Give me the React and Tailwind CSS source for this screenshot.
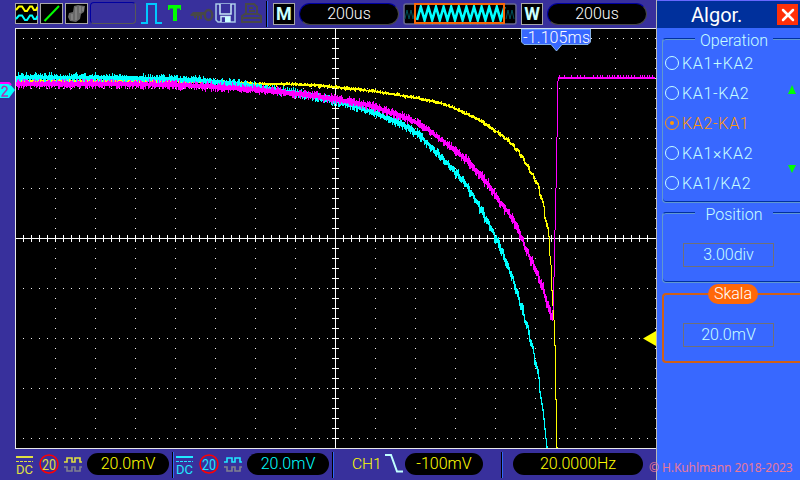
import { X } from 'lucide-react'

// [x, y] anchors of each trace, in screen pixels
const CH1 = [
  [16, 81], [150, 81], [220, 82], [260, 84], [300, 84.5], [335, 87], [375, 91.5], [410, 97], [440, 103], [460, 111],
  [475, 118], [495, 131], [507, 140], [519, 153], [528, 168], [538, 187], [544, 212], [548, 238],
  [551, 265], [552, 290], [554, 320], [555, 345], [556, 400], [557, 448],
]
const CH2 = [
  [16, 77.5], [90, 77.5], [150, 78.5], [200, 80.5], [235, 84], [270, 89], [300, 94], [335, 101], [350, 105],
  [375, 113], [400, 124], [417, 134], [433, 150], [450, 167], [467, 187], [483, 215], [490, 228],
  [500, 249], [510, 273], [520, 305], [528, 332], [536, 368], [543, 410], [547, 448],
]
const MATH = [
  [16, 84], [100, 84], [150, 84.5], [200, 86], [235, 88], [270, 91], [300, 94], [333, 99], [367, 105], [383, 110],
  [400, 116], [417, 123], [433, 134], [450, 147], [467, 161], [483, 179], [498, 200], [510, 216],
  [520, 236], [527, 253], [537, 275], [547, 303], [552, 318],
]
const MATH_EDGE = 'M552.5 320V310M553.5 310V277M554.5 277V230M555.5 230V188M556.5 188V137M557.5 137V81M558.5 81V77'

function yAt(points, x) {
  for (let i = 1; i < points.length; i++) {
    const [x0, y0] = points[i - 1]
    const [x1, y1] = points[i]
    if (x <= x1) return y0 + ((y1 - y0) * (x - x0)) / (x1 - x0)
  }
  return points[points.length - 1][1]
}

// one vertical min/max bar per pixel column, like the scope does it
// the samples come in 5px blocks, so the steep part looks like a staircase
function trace(points, half, noise, seed) {
  let s = seed
  const rnd = () => {
    s = (s * 16807) % 2147483647
    return s / 2147483647
  }
  const end = points[points.length - 1][0]
  const lastBlock = Math.floor(end / 5) * 5 - 5
  const stair = x => {
    if (x >= lastBlock) return yAt(points, x)
    const block = Math.floor(x / 5) * 5
    const t = (x - block) / 5
    return yAt(points, block + 5 * (t < 0.7 ? t * 0.45 : 0.315 + (t - 0.7) * 2.283))
  }
  let d = ''
  for (let x = 16; x <= end; x++) {
    const a = stair(x)
    const b = stair(x + 1)
    const thin = Math.abs(b - a) > 5 ? 0.3 : 1
    const top = Math.round(Math.min(a, b) - thin * (half + rnd() ** 2 * noise))
    const bottom = Math.round(Math.max(a, b) + thin * (half + rnd() ** 2 * noise))
    d += `M${x + 0.5} ${top}V${Math.min(bottom, 448)}`
  }
  return d
}

function flatTop() {
  let d = 'M559 78H655'
  const bumps = [559, 564, 571, 577, 580, 584, 593, 597, 600, 602, 607, 609, 612, 614, 617, 618, 620, 623, 626, 628, 631, 634, 640, 642, 644, 647, 649, 652]
  bumps.forEach(x => { d += `M${x + 0.5} 75V77` })
  return d
}

function grid() {
  let d = ''
  for (let y = 38; y < 448; y += 50) {
    for (let x = 23; x < 655; x += 8) d += `M${x} ${y + 0.5}h1`
  }
  for (let x = 55; x <= 655; x += 40) {
    for (let y = 38; y < 448; y += 10) d += `M${x} ${y + 0.5}h1`
  }
  return d
}

function axes() {
  let d = 'M16 238.5H656M335.5 29V448'
  for (let x = 23; x < 655; x += 8) d += `M${x + 0.5} 235v7`
  for (let y = 38; y < 448; y += 10) d += `M332 ${y + 0.5}h7`
  return d
}

function zigzag(x0, x1, step, lo, hi) {
  let d = `M${x0} ${lo}`
  let up = true
  for (let x = x0 + step; x <= x1; x += step) {
    d += `L${x} ${up ? hi : lo}`
    up = !up
  }
  return d
}

function Pill({ className, children }) {
  return (
    <div className={`flex shrink-0 items-center justify-center rounded-full bg-black text-[16px] leading-none font-light ${className}`}>
      {children}
    </div>
  )
}

function Divider({ className }) {
  return <div className={`h-[26px] w-[2px] shrink-0 border-l border-black bg-[#3068f8] ${className}`} />
}

function Letter({ children, className }) {
  return (
    <div className={`flex h-[22px] w-[22px] shrink-0 items-center justify-center border border-[#a8a8a8] bg-black text-[18px] leading-none font-bold text-[#c8ffff] ${className}`}>
      {children}
    </div>
  )
}

function TopBar() {
  return (
    <div className="flex h-[28px] items-start bg-[#38309c] pt-[3px] pl-[15px]">
      {/* Iconos de menú */}
      <svg className="h-[21px] w-[23px] shrink-0" viewBox="0 0 23 21">
        <rect x=".5" y=".5" width="22" height="20" fill="#000" stroke="#a8a8a8" />
        <path d="M1 7L4 3.500L7 3.500L10 8L12 8L15 3.500H17L19 7H21L22.500 4" fill="none" stroke="#ff0" strokeWidth="2" />
        <path d="M1 16L4 12.500L7 12.500L10 17L12 17L15 12.500H17L19 16H21L22.500 13" fill="none" stroke="#0ff" strokeWidth="2" />
      </svg>
      <svg className="ml-[2px] h-[21px] w-[23px] shrink-0" viewBox="0 0 23 21">
        <rect x=".5" y=".5" width="22" height="20" fill="#000" stroke="#a8a8a8" />
        <path d="M4.500 18L19 3" stroke="#0f0" strokeWidth="2" />
      </svg>
      <svg className="ml-[2px] h-[21px] w-[23px] shrink-0" viewBox="0 0 23 21">
        <rect x=".5" y=".5" width="22" height="20" fill="#000" stroke="#a8a8a8" />
        <path d="M9 3L13 2L20 3L19 9L16 11L15 16L11 19L5 18L3 14L4 10L8 9Z" fill="#686868" />
        <path d="M11 4V17M15 3V10M7 11V17M18 4V8" stroke="#888" strokeWidth="1.500" />
      </svg>
      <div className="-mt-px ml-[2px] h-[22px] w-[46px] shrink-0 rounded-[4px] border border-t-[#0000a0] border-r-[#585858] border-b-[#585858] border-l-[#0000a0]" />
      <svg className="ml-[5px] h-[21px] w-[22px] shrink-0" viewBox="0 0 22 21">
        <path d="M0 20H6V1H15V20H21" fill="none" stroke="#00c8ff" strokeWidth="2" />
      </svg>
      <svg className="ml-[5px] h-[21px] w-[14px] shrink-0" viewBox="0 0 14 21">
        <path d="M0 2H13V7H12V5.500H9V18H5V5.500H1.500V7H0Z" fill="#0f0" />
      </svg>
      <svg className="ml-[8px] h-[21px] w-[24px] shrink-0" viewBox="0 0 24 21">
        <path d="M0 12L3 9H14V12H12V16H10V13H9V17H7V13H6V15H4V13H1Z" fill="#484848" />
        <ellipse cx="18.500" cy="12" rx="3.700" ry="5" fill="none" stroke="#484848" strokeWidth="2.500" />
      </svg>
      <svg className="ml-[1px] h-[21px] w-[21px] shrink-0" viewBox="0 0 21 21">
        <path d="M1 1H20V19H3L1 17Z" fill="#38309c" stroke="#a8c8e8" strokeWidth="1.500" />
        <path d="M5 1V11H16V1M6 19V13.500H15V19" fill="#38309c" stroke="#c8e8f8" strokeWidth="1.500" />
        <path d="M10 14H15V19H10Z" fill="#c8ffff" />
      </svg>
      <svg className="ml-[5px] h-[21px] w-[21px] shrink-0" viewBox="0 0 21 21" fill="none" stroke="#484848" strokeWidth="2">
        <path d="M5 10V1H13L16 4V10M8 5H12M8 8H14M1 19V13L4 11H17L20 13V19ZM1 15H20" />
      </svg>
      <Divider className="-mt-[2px] ml-[4px]" />

      {/* Base de tiempo */}
      <Letter className="ml-[5px]">M</Letter>
      <Pill className="ml-[4px] h-[22px] w-[100px] border border-t-[#0000a0] border-r-[#484848] border-b-[#484848] border-l-[#0000a0] text-white">200us</Pill>
      <svg className="ml-[4px] h-[22px] w-[114px] shrink-0" viewBox="0 0 114 22">
        <rect x="1" y="1" width="112" height="20" rx="2" fill="#000" stroke="#686890" strokeWidth="1.500" />
        <path d={zigzag(2, 12, 2, 16, 7)} fill="none" stroke="#005058" />
        <path d={zigzag(103, 112, 2, 16, 7)} fill="none" stroke="#005058" />
        <path d={zigzag(14, 102, 3.8, 17, 4)} fill="none" stroke="#0ff" strokeWidth="2.600" />
        <rect x="12" y="1" width="89" height="19" fill="none" stroke="#f86808" strokeWidth="2" />
      </svg>
      <Letter className="ml-[4px]">W</Letter>
      <Pill className="ml-[4px] h-[22px] w-[100px] border border-t-[#0000a0] border-r-[#484848] border-b-[#484848] border-l-[#0000a0] text-white">200us</Pill>
    </div>
  )
}

function Plot() {
  return (
    <svg className="h-[421px] w-[656px] shrink-0" viewBox="0 28 656 421">
      <rect x="0" y="28" width="15" height="421" fill="#38309c" />
      <rect x="15" y="28" width="641" height="421" fill="#000" />
      <g fill="none" shapeRendering="crispEdges">
        <path d="M15.500 28V449M15 28.500H656M15 448.500H656" stroke="#e8e8e8" />
        <path d={grid()} stroke="#f0f0f0" />
        <path d={axes()} stroke="#fff" />
        <path d={trace(CH1, 0.8, 1.6, 77)} stroke="#ff0" />
        <path d={trace(CH2, 1.7, 3.6, 4242)} stroke="#0ff" />
        <path d={trace(MATH, 1.8, 3.8, 991)} stroke="#f0f" />
        <path d={MATH_EDGE} stroke="#f0f" />
        <path d={flatTop()} stroke="#f0f" />
        <path d="M559 77.500H655" stroke="#f0f" />
      </g>

      {/* Marcas de canal, disparo y tiempo */}
      <path d="M0 83H9L15 90L9 98H0Z" fill="#0ff" />
      <path d="M0 83H9L11 85" fill="none" stroke="#f0f" strokeWidth="2" />
      <path d="M2 89C2 85 7 86 7 89C7 91 2 94 2 96H8" fill="none" stroke="#b030b0" strokeWidth="1.500" />
      <path d="M656 331L643 338.500L656 346Z" fill="#ff0" />
      <path d="M521.500 29V42L524 44.500H551L556.500 51L562 44.500H588L590.500 42V29Z" fill="#3868ff" stroke="#a0d0ff" strokeWidth=".8" />
      <text x="523" y="43" fill="#fff" fontSize="16" fontWeight="300" textLength="67" lengthAdjust="spacing">-1.105ms</text>
    </svg>
  )
}

// acoplamiento, límite de banda 20 MHz y sonda de un canal
function ChannelIcons({ color, className }) {
  return (
    <svg className={`h-[22px] w-[70px] shrink-0 ${className}`} viewBox="0 0 70 22" stroke={color} fill="none">
      <path d="M1 4H18" strokeWidth="2" />
      <path d="M1 8.500H18" strokeDasharray="3 1" />
      <text x="1" y="20.500" fill={color} stroke="none" fontSize="13" textLength="17" lengthAdjust="spacingAndGlyphs">DC</text>
      <circle cx="34" cy="11" r="9" stroke="#f00" strokeWidth="1.500" />
      <text x="27" y="16.500" fill={color} stroke="none" fontSize="15" textLength="14" lengthAdjust="spacingAndGlyphs">20</text>
      <path d="M49 9H52V5H57V9H60V5H65V9H67" strokeWidth="1.600" />
      <path d="M49 14H52V18H57V14H60V18H65V14H67" stroke="#808090" strokeWidth="1.600" />
    </svg>
  )
}

function BottomBar() {
  return (
    <div className="flex h-[31px] items-start bg-[#38309c] pt-[4px] pl-[15px]">
      <ChannelIcons color="#e0e040" />
      <Pill className="ml-[2px] h-[22px] w-[82px] text-[#ff0]">20.0mV</Pill>
      <Divider className="-mt-px ml-[3px]" />
      <ChannelIcons color="#20e8ff" className="ml-[1px]" />
      <Pill className="ml-[2px] h-[22px] w-[82px] text-[#0ff]">20.0mV</Pill>
      <Divider className="-mt-px ml-[3px]" />
      <span className="ml-[18px] w-[32px] text-[15.500px] leading-[23px] font-light text-[#ff0]">CH1</span>
      <svg className="ml-[1px] h-[20px] w-[18px] shrink-0" viewBox="0 0 18 20">
        <path d="M0 2H6L12 18.500H18" fill="none" stroke="#c0ffff" strokeWidth="2" />
      </svg>
      <Pill className="ml-[2px] h-[22px] w-[78px] text-[#ff0]">-100mV</Pill>
      <Divider className="-mt-px ml-[18px]" />
      <Pill className="ml-[10px] h-[22px] w-[130px] text-[#ff0]">20.0000Hz</Pill>
    </div>
  )
}

function Group({ title, className, children }) {
  return (
    <div className={`relative ml-[5px] rounded-l-[4px] border border-r-0 border-[#6098d0] border-t-[#0030a0] shadow-[inset_0_1px_#6098d0,inset_0_-1px_#0030a0] ${className}`}>
      <span className="absolute -top-[8px] left-[32px] flex h-[20px] w-[78px] items-center justify-center bg-[#3868ff] text-[16px] leading-none font-light text-[#c8ffff]">
        {title}
      </span>
      {children}
    </div>
  )
}

function Value({ children }) {
  return (
    <div className="ml-[20px] flex h-[24px] w-[91px] items-center justify-center border border-[#707078] text-[16px] leading-none font-light text-[#c8ffff]">
      {children}
    </div>
  )
}

const operations = ['KA1+KA2', 'KA1-KA2', 'KA2-KA1', 'KA1×KA2', 'KA1/KA2']

function Panel() {
  return (
    <div className="h-[480px] w-[144px] shrink-0 overflow-hidden border-l border-[#b8b8b8] bg-[#3868ff]">
      <div className="flex h-[28px] items-center border-t border-[#6868ff] bg-[#00309c] pl-[34px] text-white">
        <span className="w-[86px] text-[20px] leading-none">Algor.</span>
        <span className="flex h-[21px] w-[21px] items-center justify-center bg-[#ff3008]">
          <X size={20} strokeWidth={3} />
        </span>
      </div>

      <Group title="Operation" className="mt-[10px] h-[165px] pt-[9px]">
        {operations.map((op, i) => (
          <div key={op} className={`flex h-[30px] items-center pl-[2px] ${i === 2 ? 'text-[#ff9808]' : 'text-[#c8ffff]'}`}>
            <span className="flex h-[14px] w-[14px] items-center justify-center rounded-full border border-current">
              {i === 2 && <span className="h-[4px] w-[4px] rounded-full bg-current" />}
            </span>
            <span className="ml-[3px] w-[101px] pt-[2px] text-[16px] leading-none font-light tracking-[0.700px]">{op}</span>
            {i === 1 && (
              <svg className="-mt-[8px] ml-[5px] h-[9px] w-[8px]" viewBox="0 0 8 9"><path d="M4 0L8 9H0Z" fill="#0f0" /></svg>
            )}
            {i === 4 && (
              <svg className="-mt-[29px] ml-[5px] h-[8px] w-[8px]" viewBox="0 0 8 8"><path d="M4 8L8 0H0Z" fill="#0f0" /></svg>
            )}
          </div>
        ))}
      </Group>

      <Group title="Position" className="mt-[9px] h-[71px] pt-[30px]">
        <Value>3.00div</Value>
      </Group>

      {/* Grupo seleccionado */}
      <div className="relative mt-[10px] ml-[5px] h-[70px] rounded-l-[4px] border-2 border-r-0 border-[#d06018] pt-[28px]">
        <span className="absolute -top-[11px] left-[44px] flex h-[20px] w-[50px] items-center justify-center rounded-full bg-[#ff6808] text-[16px] leading-none font-light text-white">
          Skala
        </span>
        <div className="-ml-px">
          <Value>20.0mV</Value>
        </div>
      </div>
    </div>
  )
}

export default function App() {
  return (
    <div className="relative flex h-[480px] w-[800px] overflow-hidden bg-[#38309c] font-['Roboto','Liberation_Sans',sans-serif]">
      <div className="flex w-[656px] shrink-0 flex-col">
        <TopBar />
        <Plot />
        <BottomBar />
      </div>
      <Panel />
      <span className="absolute top-[459px] left-[649px] font-['Noto_Sans',sans-serif] text-[12px] leading-[18px] tracking-[-0.080px] whitespace-nowrap text-[#e87898]">
        © H.Kuhlmann 2018-2023
      </span>
    </div>
  )
}
